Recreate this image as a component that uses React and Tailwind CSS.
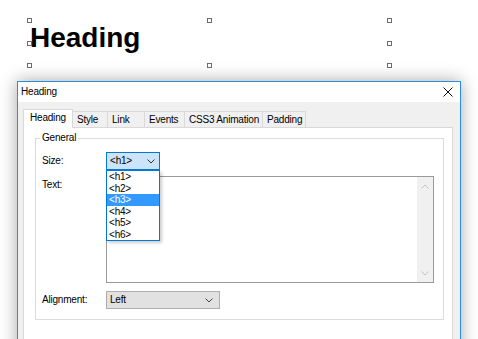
import React from 'react';

const handles = [
    'left-[-3px] top-[-3px]',
    'left-[177px] top-[-3px]',
    'left-[357px] top-[-3px]',
    'left-[-3px] top-[20px]',
    'left-[357px] top-[20px]',
    'left-[-3px] top-[42px]',
    'left-[177px] top-[42px]',
    'left-[357px] top-[42px]',
];

const tabs = [
    { label: 'Style', w: 'w-[35px]' },
    { label: 'Link', w: 'w-[37px]' },
    { label: 'Events', w: 'w-[40px]' },
    { label: 'CSS3 Animation', w: 'w-[78px]' },
    { label: 'Padding', w: 'w-[43px]' },
];

const sizes = ['<h1>', '<h2>', '<h3>', '<h4>', '<h5>', '<h6>'];

function Chevron({ color = '#333' }) {
    return (
        <svg width="8" height="5" viewBox="0 0 8 5" className="shrink-0">
            <path d="M0.5 0.5 L4 4 L7.5 0.5" stroke={color} strokeWidth="1" fill="none" />
        </svg>
    );
}

export default function App() {
    return (
        <div className="w-[478px] h-[339px] overflow-hidden bg-white text-black font-['Liberation_Sans',Arial,sans-serif]">
            {/* selected heading element on the canvas */}
            <div className="relative ml-[30px] mt-[21px] w-[360px] h-[45px]">
                <h1 className="text-[28px] leading-[33px] font-bold">Heading</h1>
                {handles.map((pos) => (
                    <span key={pos} className={`absolute ${pos} w-[5px] h-[5px] border border-[#6b6b6b] bg-white z-10`} />
                ))}
            </div>

            {/* dialog window */}
            <div className="ml-[17px] mt-[15px] w-[444px] border border-[#2b8fdf] bg-[#f0f0f0] shadow-[0_0_16px_rgba(0,0,0,0.35)]">
                <div className="h-[20px] bg-white flex items-center justify-between pl-[3px] pr-[7px]">
                    <span className="text-[10px] leading-[12px] tracking-[-0.2px]">Heading</span>
                    <svg width="10" height="10" viewBox="0 0 10 10">
                        <path d="M0.5 0.5 L9.5 9.5 M9.5 0.5 L0.5 9.5" stroke="#111" strokeWidth="1" fill="none" />
                    </svg>
                </div>

                <div className="pl-[5px] pr-[7px] pt-[7px]">
                    {/* tabs */}
                    <div className="flex items-end h-[18px] text-[10px] leading-[12px] tracking-[-0.2px]">
                        <div className="relative z-10 -mb-[1px] h-[19px] w-[50px] bg-white border border-b-0 border-[#d9d9d9] pl-[6px] pt-[2px]">
                            Heading
                        </div>
                        {tabs.map((t) => (
                            <div key={t.label} className={`${t.w} h-[16px] border-t border-r border-[#d9d9d9] pl-[4px] pt-[2px] whitespace-nowrap`}>
                                {t.label}
                            </div>
                        ))}
                    </div>

                    {/* tab page */}
                    <div className="border border-[#d9d9d9] bg-white pt-[4px] pl-[11px] pr-[8px] pb-[40px] text-[10px] leading-[12px] tracking-[-0.2px]">
                        <fieldset className="border border-[#dcdcdc] pl-[6px] pr-[9px] pt-[8px] pb-[10px]">
                            <legend className="ml-[-2px] px-[2px]">General</legend>

                            <div className="flex items-center h-[18px]">
                                <span className="w-[64px]">Size:</span>
                                <div className="relative">
                                    <div className="w-[54px] h-[18px] border border-[#0078d7] bg-[#cce4f7] flex items-center justify-between pl-[3px] pr-[4px]">
                                        <span>&lt;h1&gt;</span>
                                        <Chevron />
                                    </div>
                                    <ul className="absolute left-0 top-full z-20 w-[54px] border border-[#0078d7] bg-white shadow-[2px_2px_3px_rgba(0,0,0,0.2)]">
                                        {sizes.map((s, i) => (
                                            <li
                                                key={s}
                                                className={`h-[11.5px] leading-[11.5px] pl-[2px] ${i === 2 ? 'bg-[#3399ff] text-white' : ''}`}
                                            >
                                                {s}
                                            </li>
                                        ))}
                                    </ul>
                                </div>
                            </div>

                            <div className="flex mt-[6px]">
                                <span className="w-[64px] pt-[3px]">Text:</span>
                                <div className="flex-1 h-[107px] border border-[#9a9a9a] bg-white flex">
                                    <div className="flex-1" />
                                    <div className="w-[16px] bg-[#f0f0f0] flex flex-col items-center justify-between pt-[7px] pb-[6px]">
                                        <svg width="8" height="5" viewBox="0 0 8 5">
                                            <path d="M0.5 4.5 L4 1 L7.5 4.5" stroke="#c2c2c2" strokeWidth="1" fill="none" />
                                        </svg>
                                        <Chevron color="#c2c2c2" />
                                    </div>
                                </div>
                            </div>

                            <div className="flex items-center mt-[8px]">
                                <span className="w-[64px]">Alignment:</span>
                                <div className="w-[114px] h-[18px] border border-[#adadad] bg-[#e1e1e1] flex items-center justify-between pl-[3px] pr-[6px]">
                                    <span>Left</span>
                                    <Chevron color="#444" />
                                </div>
                            </div>
                        </fieldset>
                    </div>
                </div>
            </div>
        </div>
    );
}
